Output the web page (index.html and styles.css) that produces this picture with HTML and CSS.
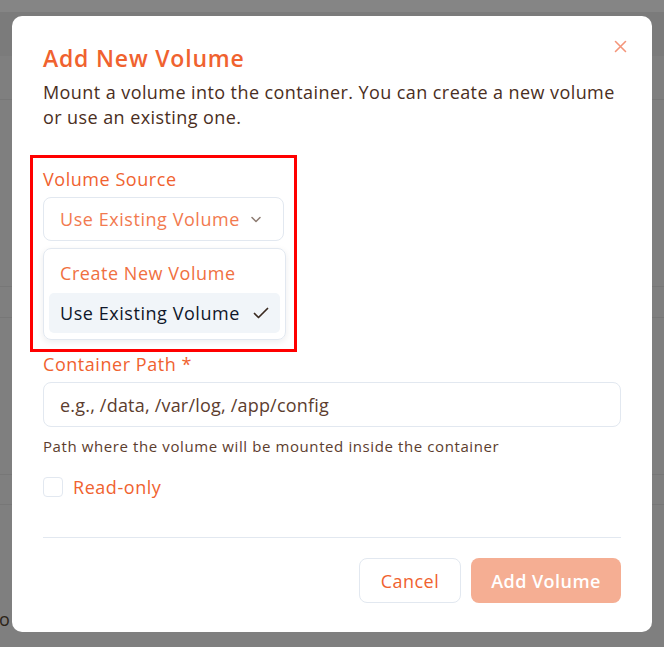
FILE: index.html
```html
<!DOCTYPE html>
<html lang="en">
<head>
    <meta charset="UTF-8">
    <meta name="viewport" content="width=device-width, initial-scale=1.0">
    <title>Add New Volume</title>
    <link rel="stylesheet" href="styles.css">
</head>
<body>

    <!-- Page behind the dialog -->
    <div class="page">
        <div class="page-top"></div>
        <div class="page-row page-row-head"></div>
        <div class="page-row page-row-a"></div>
        <div class="page-row page-row-b"></div>
        <div class="page-row page-row-c"></div>
        <div class="page-row page-row-d"></div>
        <div class="page-row page-row-e"></div>
        <div class="page-stray">o</div>
    </div>

    <div class="overlay">
        <div class="modal">
            <button class="modal-close" aria-label="Close">
                <svg width="13" height="13" viewBox="0 0 13 13" fill="none" stroke="currentColor" stroke-width="1.6" stroke-linecap="round">
                    <path d="M1.5 1.5l10 10M11.5 1.5l-10 10"/>
                </svg>
            </button>

            <h2 class="modal-title">Add New Volume</h2>
            <p class="modal-desc">Mount a volume into the container. You can create a new volume or use an existing one.</p>

            <!-- Volume Source -->
            <div class="field field-marked">
                <label class="field-label">Volume Source</label>
                <div class="select">
                    <span>Use Existing Volume</span>
                    <svg width="14" height="14" viewBox="0 0 14 14" fill="none" stroke="currentColor" stroke-width="1.5" stroke-linecap="round" stroke-linejoin="round">
                        <path d="M3 5.5l4 4 4-4"/>
                    </svg>
                </div>
                <ul class="menu">
                    <li class="menu-item">Create New Volume</li>
                    <li class="menu-item is-selected">
                        <span>Use Existing Volume</span>
                        <svg width="18" height="18" viewBox="0 0 18 18" fill="none" stroke="currentColor" stroke-width="1.7" stroke-linecap="round" stroke-linejoin="round">
                            <path d="M2.5 9.5l4 4 9-9"/>
                        </svg>
                    </li>
                </ul>
            </div>

            <!-- Container Path -->
            <div class="field">
                <label class="field-label" for="containerPath">Container Path *</label>
                <input type="text" id="containerPath" class="text-input" placeholder="e.g., /data, /var/log, /app/config">
                <p class="field-hint">Path where the volume will be mounted inside the container</p>
            </div>

            <label class="checkbox">
                <span class="checkbox-box"></span>
                <span>Read-only</span>
            </label>

            <div class="modal-footer">
                <button class="btn btn-outline">Cancel</button>
                <button class="btn btn-primary">Add Volume</button>
            </div>
        </div>
    </div>

</body>
</html>
```

FILE: styles.css
```css
* {
    margin: 0;
    padding: 0;
    box-sizing: border-box;
}

body {
    font-family: 'Open Sans', 'Liberation Sans', sans-serif;
    background: #7f7f7f;
    color: #4a2e22;
    width: 664px;
    height: 647px;
    overflow: hidden;
}

/* Background page (dimmed) */
.page {
    height: 647px;
    position: relative;
}

.page-top {
    height: 12px;
    background: #858585;
}

.page-row {
    border-bottom: 1px solid #777;
}

.page-row-head {
    height: 44px;
    background: #7b7b7b;
    border-bottom: none;
}

.page-row-a { height: 44px; }
.page-row-b { height: 187px; }
.page-row-c { height: 31px; }
.page-row-d { height: 157px; }
.page-row-e { height: 30px; }

.page-stray {
    position: absolute;
    left: -1px;
    top: 607px;
    font-size: 18px;
    color: #2d2418;
}

/* Dialog */
.overlay {
    position: fixed;
    inset: 0;
    padding: 16px 12px;
}

.modal {
    position: relative;
    width: 640px;
    background: #fff;
    border-radius: 10px;
    padding: 28px 31px 29px;
    font-size: 18px;
    letter-spacing: 0.55px;
}

.modal-close {
    position: absolute;
    top: 24px;
    right: 25px;
    background: none;
    border: none;
    color: #f4957a;
    display: flex;
}

.modal-title {
    font-size: 23px;
    line-height: 28px;
    letter-spacing: 0.8px;
    font-weight: 600;
    color: #f0622f;
}

.modal-desc {
    margin-top: 8px;
    line-height: 25px;
    letter-spacing: 0.42px;
    color: #4a2e22;
}

.field-marked {
    margin-top: 25px;
    margin-left: -13px;
    width: 267px;
    border: 3px solid #ff0000;
    padding: 9px 10px;
}

.field-label {
    display: block;
    line-height: 24px;
    font-weight: 500;
    color: #f0622f;
}

.select {
    margin-top: 6px;
    height: 44px;
    border: 1px solid #e2e8f0;
    border-radius: 8px;
    padding: 0 20px 0 16px;
    display: flex;
    align-items: center;
    justify-content: space-between;
    color: #f27a4f;
}

.select svg {
    color: #8c7a70;
}

.menu {
    list-style: none;
    margin-top: 7px;
    width: calc(100% + 2px);
    border: 1px solid #e2e8f0;
    border-radius: 8px;
    padding: 4px 5px 6px;
    box-shadow: 0 2px 6px rgba(15, 23, 42, 0.08);
}

.menu-item {
    height: 40px;
    padding: 0 10px 0 11px;
    border-radius: 5px;
    display: flex;
    align-items: center;
    justify-content: space-between;
    color: #f0703f;
}

.menu-item.is-selected {
    background: #f1f5f9;
    color: #0f172a;
}

.menu-item.is-selected svg {
    color: #3a2a20;
}

.text-input {
    display: block;
    width: 100%;
    margin-top: 6px;
    height: 45px;
    border: 1px solid #e2e8f0;
    border-radius: 8px;
    padding: 0 16px;
    font-family: inherit;
    font-size: 18px;
    letter-spacing: 0.2px;
    outline: none;
}

.text-input::placeholder {
    color: #5c3d2e;
}

.field-hint {
    margin-top: 9px;
    font-size: 15px;
    line-height: 20px;
    letter-spacing: 0.6px;
    color: #5c3d2e;
}

.checkbox {
    margin-top: 21px;
    display: flex;
    align-items: center;
    gap: 10px;
    line-height: 20px;
    font-weight: 500;
    color: #f0622f;
}

.checkbox-box {
    width: 20px;
    height: 20px;
    border: 1px solid #e2e8f0;
    border-radius: 4px;
}

.modal-footer {
    margin-top: 40px;
    border-top: 1px solid #e2e8f0;
    padding-top: 20px;
    display: flex;
    justify-content: flex-end;
    gap: 10px;
}

.btn {
    height: 45px;
    padding: 0 10px;
    border-radius: 8px;
    font-family: inherit;
    font-size: 18px;
    letter-spacing: 0.45px;
    font-weight: 500;
    cursor: pointer;
}

.btn-outline {
    width: 102px;
    background: #fff;
    border: 1px solid #e2e8f0;
    color: #f0622f;
}

.btn-primary {
    width: 150px;
    background: #f5ae93;
    border: none;
    color: #fff;
    font-weight: 600;
}
```
